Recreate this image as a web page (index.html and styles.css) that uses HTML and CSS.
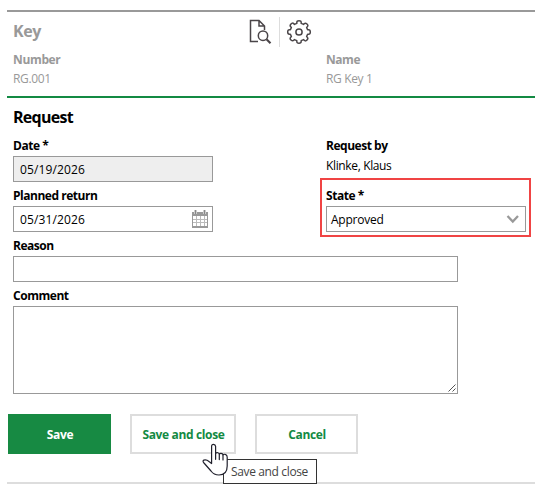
FILE: index.html
```html
<!DOCTYPE html>
<html lang="en">
<head>
<meta charset="utf-8">
<title>Key request</title>
<link rel="stylesheet" href="styles.css">
</head>
<body>
<main class="page">
  <section class="key">
    <header class="key-head">
      <h2 class="title">Key</h2>
      <div class="tools">
        <svg class="tool" width="24" height="26" viewBox="0 0 24 26" fill="none" stroke="#4a4548" stroke-width="1.5">
          <path d="M9 22.5H1.5V1.5H10L15.5 7V11M10 1.5V7H15.5"/>
          <circle cx="14" cy="16.7" r="4.7"/>
          <path d="M17.5 20.2L21.5 24.2" stroke-width="2.2"/>
        </svg>
        <span class="divider"></span>
        <svg class="tool" width="26" height="26" viewBox="-13 -13 26 26" fill="none" stroke="#4a4548" stroke-width="1.5" stroke-linejoin="round">
          <path d="M-2.2-8.6V-9.6Q-2.2-11.3 0-11.3T2.2-9.6V-8.6L4.5-7.6L5.2-8.3Q6.4-9.5 8-8T8.3-5.2L7.6-4.5L8.6-2.2H9.6Q11.3-2.2 11.3 0T9.6 2.2H8.6L7.6 4.5L8.3 5.2Q9.5 6.4 8 8T5.2 8.3L4.5 7.6L2.2 8.6V9.6Q2.2 11.3 0 11.3T-2.2 9.6V8.6L-4.5 7.6L-5.2 8.3Q-6.4 9.5-8 8T-8.3 5.2L-7.6 4.5L-8.6 2.2H-9.6Q-11.3 2.2-11.3 0T-9.6-2.2H-8.6L-7.6-4.5L-8.3-5.2Q-9.5-6.4-8-8T-5.2-8.3L-4.5-7.6Z"/>
          <circle r="3.1"/>
        </svg>
      </div>
    </header>
    <div class="columns key-info">
      <div><div class="label number">Number</div><div class="value">RG.001</div></div>
      <div><div class="label">Name</div><div class="value">RG Key 1</div></div>
    </div>
  </section>
  <section class="request">
    <h2 class="title">Request</h2>
    <div class="columns">
      <div class="field"><div class="label">Date *</div><div class="input date disabled">05/19/2026</div></div>
      <div class="field"><div class="label">Request by</div><div class="value">Klinke, Klaus</div></div>
    </div>
    <div class="columns">
      <div class="field"><div class="label">Planned return</div>
        <div class="input date">05/31/2026
          <svg width="17" height="19" viewBox="0 0 17 19">
            <rect x=".5" y="2.5" width="15" height="15" rx="1" fill="#fff" stroke="#999"/>
            <path d="M0 2H16V6H0ZM0 16H16V18H0Z" fill="#999"/>
            <path d="M3.5 0V4M12.5 0V4" stroke="#ccc" stroke-width="3"/>
            <path d="M3.5 0V4M12.5 0V4" stroke="#888"/>
            <path d="M4.5 6V16M8.5 6V16M12.5 6V16M1 9.5H15M1 12.5H15" stroke="#bbb"/>
          </svg>
        </div>
      </div>
      <div class="field state"><div class="label">State *</div>
        <div class="input select"><span>Approved</span>
          <svg width="14" height="10" viewBox="0 0 14 10" fill="none" stroke="#999" stroke-width="2.3"><path d="M1.5 1L6.8 6.5L12 1"/></svg>
        </div>
      </div>
    </div>
    <div class="field"><div class="label">Reason</div><div class="input wide"></div></div>
    <div class="field comment"><div class="label">Comment</div><div class="input wide area">
      <svg width="8" height="8" viewBox="0 0 8 8" stroke="#555" fill="none"><path d="M.5 7.5L7.5 .5M4.5 7.5L7.5 4.5"/></svg>
    </div></div>
    <div class="buttons">
      <div class="button primary">Save</div>
      <div class="button close">Save and close</div>
      <div class="button">Cancel</div>
    </div>
  </section>
</main>
<div class="tooltip">Save and close</div>
<svg class="pointer" width="28" height="34" viewBox="0 0 28 34" fill="#fff" stroke="#20202c" stroke-width="1.2" stroke-linejoin="round" stroke-linecap="round">
  <path d="M9.6 20.5V3.4Q9.6 1.3 11.5 1.3T13.6 3.4V10.5Q14.5 9.2 16 9.7Q17 10 17.2 11Q18.5 9.9 20 10.6Q20.9 11 21 11.9Q22.3 10.8 23.8 11.6Q25.2 12.2 25.2 14.2V23Q25.2 31.9 17 32Q11.8 32 9 28L2 20Q.2 17.8 1.8 17.1Q4.5 16.3 7 18.5Z"/>
  <path d="M13.6 10.5V16.3M17.3 11V16.6M21 12V17"/>
</svg>
</body>
</html>
```

FILE: styles.css
```css
* { box-sizing: border-box; }
body {
  margin: 0;
  position: relative;
  width: 535px;
  height: 493px;
  overflow: hidden;
  background: #fff;
  color: #000;
  font: 12px/18px "Open Sans", "Noto Sans", sans-serif;
  letter-spacing: -.36px;
}
.page { margin: 10px 0 0 7px; height: 474px; border-bottom: 2px solid #ddd; }
.key { height: 88px; border-top: 2px solid #999; border-bottom: 2px solid #138a43; color: #999; padding-left: 6px; }
.key-head { display: flex; height: 39px; }
.title { margin: 0; font-size: 16px; line-height: 24px; font-weight: 700; letter-spacing: -.7px; }
.key .title { width: 236px; padding-top: 7px; letter-spacing: -.4px; }
.tools { display: flex; align-items: center; height: 40px; }
.divider { width: 1px; height: 30px; background: #ddd; margin: 0 6px; }
.columns { display: grid; grid-template-columns: 313px 1fr; }
.label { font-weight: 700; height: 18px; white-space: nowrap; letter-spacing: -.47px; }
.number { letter-spacing: -.35px; }
.value { height: 19px; padding-top: 1px; white-space: nowrap; }
.request { padding: 7px 0 0 6px; }
.request .title { height: 32px; }
.request .label { height: 19px; }
.field { height: 50px; }
.input { display: flex; justify-content: space-between; align-items: center; width: 200px; height: 26px; border: 1px solid #999; padding: 1px 3px 0 6px; background: #fff; letter-spacing: -.25px; }
.date { letter-spacing: .12px; }
.disabled { background: #eee; }
.select { padding: 1px 5px 0 4px; }
.state { width: 211px; height: 59px; border: 2px solid #f04444; margin: -9px 0 0 -6px; padding: 7px 0 0 4px; }
.columns:has(.state) { height: 50px; }
.wide { width: 445px; }
.area { height: 88px; align-items: flex-end; padding: 0 1px 1px; justify-content: flex-end; }
.comment { height: 127px; }
.buttons { display: flex; gap: 19px; margin-left: -5px; }
.button { width: 103px; height: 40px; border: 2px solid #ddd; color: #138a43; font-weight: 700; display: flex; align-items: center; justify-content: center; padding: 2px 0 0 1px; white-space: nowrap; }
.button.close { width: 106px; }
.button.primary { background: #178a43; color: #fff; border-color: #178a43; }
.tooltip { position: absolute; left: 223px; top: 459px; width: 94px; height: 25px; border: 1px solid #333; background: #fff; color: #444; padding: 3px 0 0 7px; white-space: nowrap; letter-spacing: -.36px; }
.pointer { position: absolute; left: 202px; top: 443px; }
```
